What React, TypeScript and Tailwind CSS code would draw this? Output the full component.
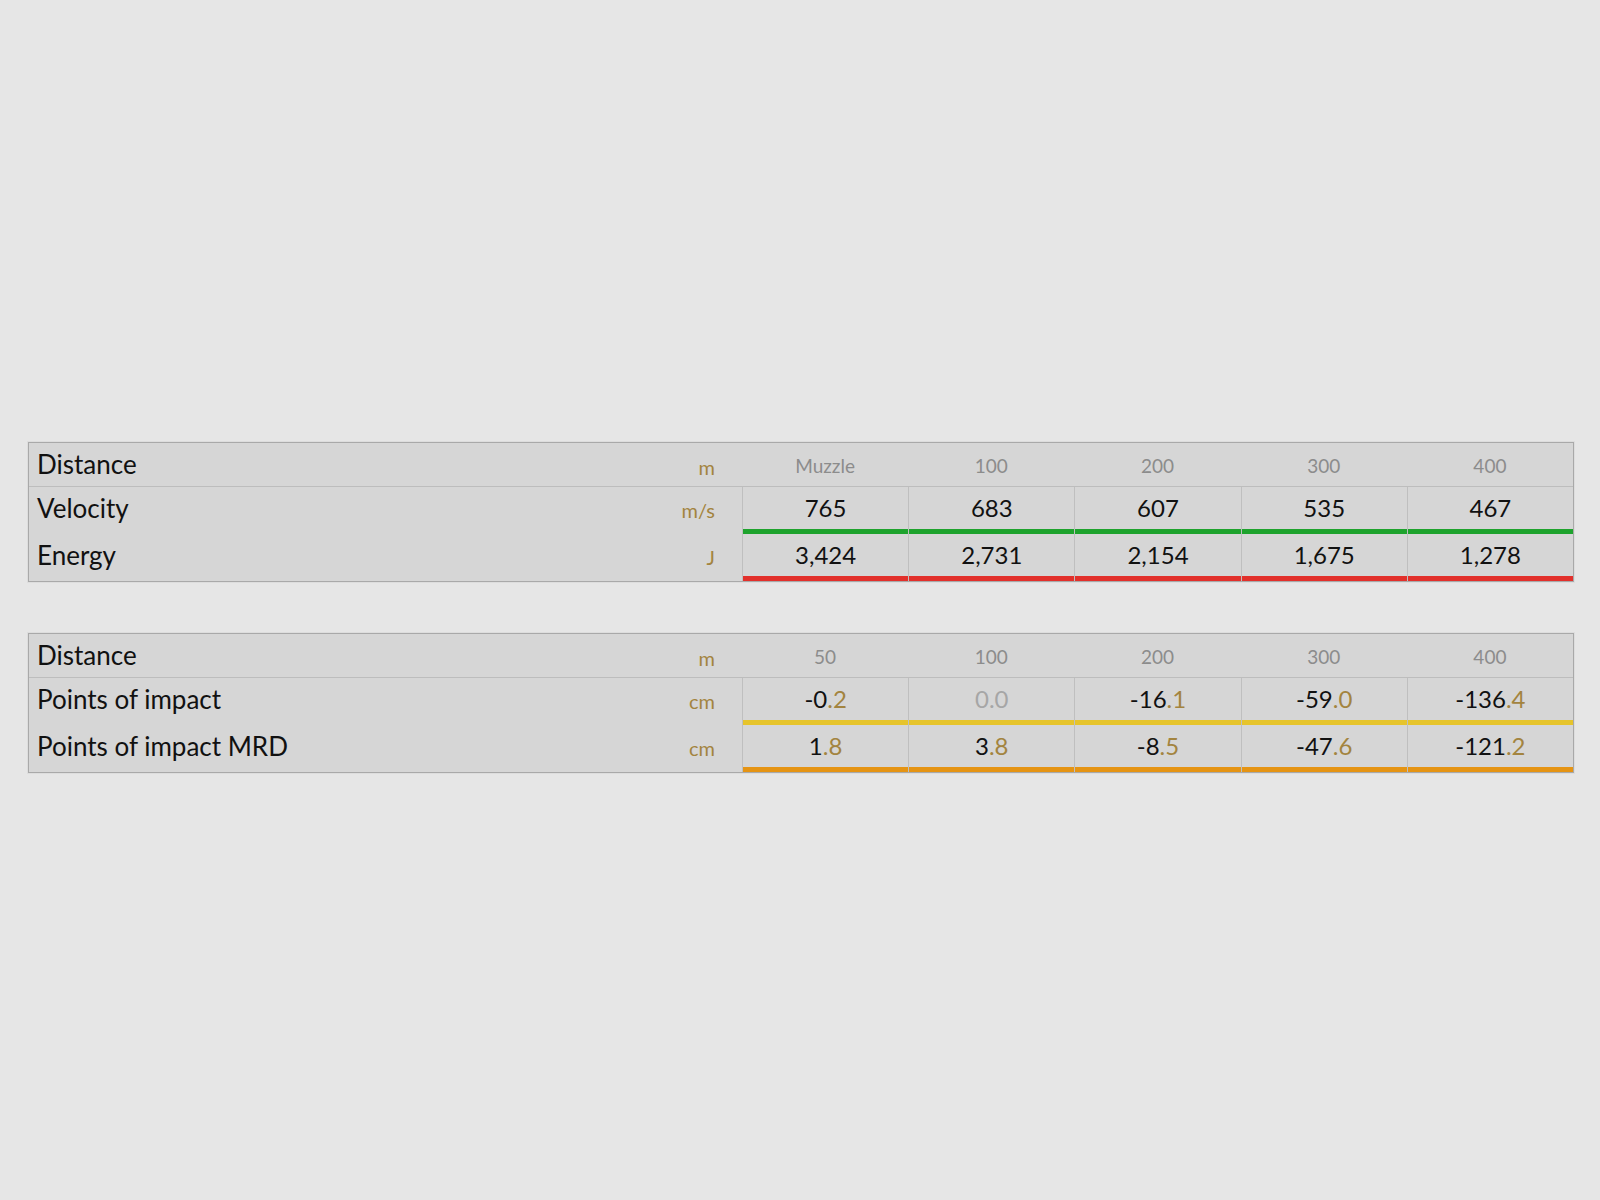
import React from "react";

type Cell = { main: string; dec?: string; muted?: boolean };

type Row = {
  label: string;
  unit: string;
  bar: string;
  cells: Cell[];
};

type Table = {
  distances: string[];
  rows: Row[];
};

const tables: Table[] = [
  {
    distances: ["Muzzle", "100", "200", "300", "400"],
    rows: [
      {
        label: "Velocity",
        unit: "m/s",
        bar: "bg-[#1ea32d]",
        cells: [{ main: "765" }, { main: "683" }, { main: "607" }, { main: "535" }, { main: "467" }],
      },
      {
        label: "Energy",
        unit: "J",
        bar: "bg-[#e2302b]",
        cells: [{ main: "3,424" }, { main: "2,731" }, { main: "2,154" }, { main: "1,675" }, { main: "1,278" }],
      },
    ],
  },
  {
    distances: ["50", "100", "200", "300", "400"],
    rows: [
      {
        label: "Points of impact",
        unit: "cm",
        bar: "bg-[#e6c42c]",
        cells: [
          { main: "-0", dec: ".2" },
          { main: "0.0", muted: true },
          { main: "-16", dec: ".1" },
          { main: "-59", dec: ".0" },
          { main: "-136", dec: ".4" },
        ],
      },
      {
        label: "Points of impact MRD",
        unit: "cm",
        bar: "bg-[#e59414]",
        cells: [
          { main: "1", dec: ".8" },
          { main: "3", dec: ".8" },
          { main: "-8", dec: ".5" },
          { main: "-47", dec: ".6" },
          { main: "-121", dec: ".2" },
        ],
      },
    ],
  },
];

function BallisticTable({ table }: { table: Table }) {
  return (
    <div className="w-[1546px] border border-[#a9a9a9] bg-[#d6d6d6] shadow-[0_0_0_1px_rgba(0,0,0,0.04)]">
      {/* distance header */}
      <div className="grid grid-cols-[713px_repeat(5,1fr)] h-[44px] border-b border-[#bdbdbd]">
        <div className="flex items-center justify-between pl-2 pr-[27px]">
          <span className="text-[26px] text-[#111]">Distance</span>
          <span className="text-[20px] text-[#a3843f] pt-1">m</span>
        </div>
        {table.distances.map((d, i) => (
          <div key={i} className="flex items-center justify-center pt-1 text-[19px] text-[#8c8c8c]">
            {d}
          </div>
        ))}
      </div>

      {table.rows.map((row, ri) => (
        <div key={ri} className="grid grid-cols-[713px_repeat(5,1fr)] h-[47px]">
          <div className="flex items-center justify-between pl-2 pr-[27px] pb-[5px]">
            <span className="text-[26px] text-[#111]">{row.label}</span>
            <span className="text-[20px] text-[#a3843f] pt-1">{row.unit}</span>
          </div>
          {row.cells.map((c, ci) => (
            <div key={ci} className="flex flex-col border-l border-[#bfbfbf]">
              <div className="flex flex-1 items-center justify-center text-[24px]">
                {c.muted ? (
                  <span className="text-[#a6a6a6]">{c.main}</span>
                ) : (
                  <span className="text-[#111]">
                    {c.main}
                    {c.dec && <span className="text-[#a3843f]">{c.dec}</span>}
                  </span>
                )}
              </div>
              <div className={`h-[5px] ${row.bar}`} />
            </div>
          ))}
        </div>
      ))}
    </div>
  );
}

export default function App() {
  return (
    <div className="min-h-screen bg-[#e6e6e6] pt-[442px] pl-[28px] font-['Lato',sans-serif]">
      <div className="flex flex-col gap-[51px]">
        {tables.map((t, i) => (
          <BallisticTable key={i} table={t} />
        ))}
      </div>
    </div>
  );
}
